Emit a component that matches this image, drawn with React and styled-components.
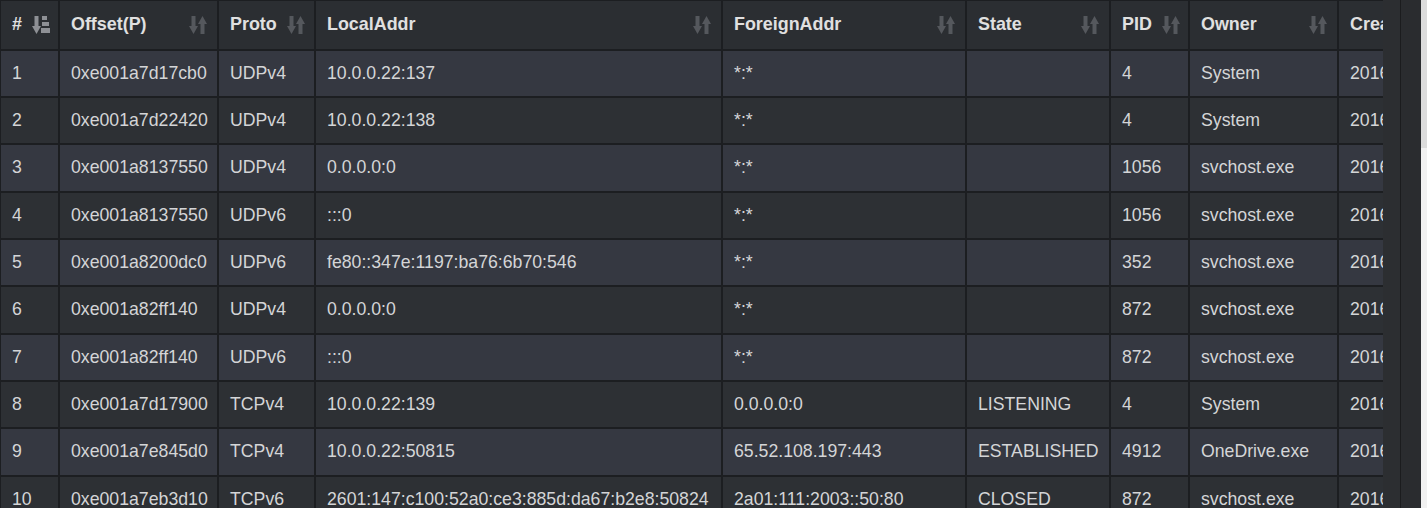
import React from "react";
import styled, { createGlobalStyle } from "styled-components";

const GlobalStyle = createGlobalStyle`
  html, body {
    margin: 0;
    padding: 0;
    background: #2a2c2f;
    overflow: hidden;
  }
`;

const Page = styled.div`
  display: flex;
  height: 508px;
  font-family: "Liberation Sans", Arial, sans-serif;
`;

const TableWrap = styled.div`
  width: 1383px;
  flex: none;
  overflow: hidden;
  background: #2b2e32;
`;

const Track = styled.div`
  width: 17px;
  flex: none;
  background: #2c2e31;
  border-right: 1px solid #1b1c1e;
`;

const Gutter = styled.div`
  width: 20px;
  flex: none;
  background: #2a2c2f;
`;

const PageBar = styled.div`
  width: 6px;
  flex: none;
  display: flex;
  flex-direction: column;
  background: #f1f1f1;
`;

const PageThumb = styled.div`
  height: 148px;
  background: #dcdcdc;
`;

const Table = styled.table`
  border-collapse: collapse;
  table-layout: fixed;
  width: 1587px;
  margin-left: -1px;
  font-size: 17.7px;
  color: #d4d5d7;
`;

const Head = styled.th`
  height: 47.6px;
  padding: 0 10px 0 11px;
  text-align: left;
  font-weight: bold;
  font-size: 17.9px;
  color: #e0e0e0;
  background: #2b2e32;
  border: 2px solid #1c1e21;
  border-top-width: 1px;
  white-space: nowrap;
  overflow: hidden;
`;

const HeadInner = styled.div`
  display: flex;
  align-items: center;
  justify-content: ${p => (p.$tight ? "flex-start" : "space-between")};
  gap: 10px;
`;

const Row = styled.tr`
  height: 47.33px;
  background: ${p => (p.$odd ? "#353841" : "#2d3034")};
`;

const Cell = styled.td`
  padding: 0 10px 0 11px;
  border: 2px solid #1c1e21;
  white-space: nowrap;
  overflow: hidden;
  vertical-align: middle;
`;

const SortIcon = styled.svg`
  flex: none;
  width: 18px;
  height: 20px;
  color: ${p => (p.$active ? "#8e9095" : "#55585d")};
`;

const SortBoth = () => (
  <SortIcon viewBox="0 0 18 20">
    <g fill="currentColor">
      <rect x="2.5" y="1" width="4" height="11" />
      <polygon points="0,11 9,11 4.5,19" />
      <polygon points="9,9 18,9 13.5,1" />
      <rect x="11.5" y="8" width="4" height="11" />
    </g>
  </SortIcon>
);

const SortAsc = () => (
  <SortIcon $active viewBox="0 0 18 20">
    <g fill="currentColor">
      <rect x="2.5" y="1" width="4" height="11" />
      <polygon points="0,11 9,11 4.5,19" />
      <rect x="10" y="1" width="5" height="4" />
      <rect x="10" y="7" width="7" height="4" />
      <rect x="9" y="13" width="9" height="5" />
    </g>
  </SortIcon>
);

const columns = [
  { key: "n", label: "#", width: 59, tight: true, active: true },
  { key: "offset", label: "Offset(P)", width: 159 },
  { key: "proto", label: "Proto", width: 97 },
  { key: "local", label: "LocalAddr", width: 407 },
  { key: "foreign", label: "ForeignAddr", width: 244 },
  { key: "state", label: "State", width: 144 },
  { key: "pid", label: "PID", width: 79 },
  { key: "owner", label: "Owner", width: 149 },
  { key: "created", label: "Created", width: 249 },
];

const rows = [
  ["1", "0xe001a7d17cb0", "UDPv4", "10.0.0.22:137", "*:*", "", "4", "System", "2016-06-17 12:36:18 UTC+0000"],
  ["2", "0xe001a7d22420", "UDPv4", "10.0.0.22:138", "*:*", "", "4", "System", "2016-06-17 12:36:18 UTC+0000"],
  ["3", "0xe001a8137550", "UDPv4", "0.0.0.0:0", "*:*", "", "1056", "svchost.exe", "2016-06-17 12:36:21 UTC+0000"],
  ["4", "0xe001a8137550", "UDPv6", ":::0", "*:*", "", "1056", "svchost.exe", "2016-06-17 12:36:21 UTC+0000"],
  ["5", "0xe001a8200dc0", "UDPv6", "fe80::347e:1197:ba76:6b70:546", "*:*", "", "352", "svchost.exe", "2016-06-17 12:36:24 UTC+0000"],
  ["6", "0xe001a82ff140", "UDPv4", "0.0.0.0:0", "*:*", "", "872", "svchost.exe", "2016-06-17 12:36:25 UTC+0000"],
  ["7", "0xe001a82ff140", "UDPv6", ":::0", "*:*", "", "872", "svchost.exe", "2016-06-17 12:36:25 UTC+0000"],
  ["8", "0xe001a7d17900", "TCPv4", "10.0.0.22:139", "0.0.0.0:0", "LISTENING", "4", "System", "2016-06-17 12:36:18 UTC+0000"],
  ["9", "0xe001a7e845d0", "TCPv4", "10.0.0.22:50815", "65.52.108.197:443", "ESTABLISHED", "4912", "OneDrive.exe", "2016-06-17 12:40:02 UTC+0000"],
  ["10", "0xe001a7eb3d10", "TCPv6", "2601:147:c100:52a0:ce3:885d:da67:b2e8:50824", "2a01:111:2003::50:80", "CLOSED", "872", "svchost.exe", "2016-06-17 12:41:10 UTC+0000"],
];

export default function App() {
  return (
    <>
      <GlobalStyle />
      <Page>
        <TableWrap>
          <Table>
            <colgroup>
              {columns.map(c => (
                <col key={c.key} style={{ width: c.width }} />
              ))}
            </colgroup>
            <thead>
              <tr>
                {columns.map(c => (
                  <Head key={c.key}>
                    <HeadInner $tight={c.tight}>
                      <span>{c.label}</span>
                      {c.active ? <SortAsc /> : <SortBoth />}
                    </HeadInner>
                  </Head>
                ))}
              </tr>
            </thead>
            <tbody>
              {rows.map((r, i) => (
                <Row key={r[0]} $odd={i % 2 === 0}>
                  {r.map((v, j) => (
                    <Cell key={j}>{v}</Cell>
                  ))}
                </Row>
              ))}
            </tbody>
          </Table>
        </TableWrap>
        <Track />
        <Gutter />
        <PageBar>
          <PageThumb />
        </PageBar>
      </Page>
    </>
  );
}
